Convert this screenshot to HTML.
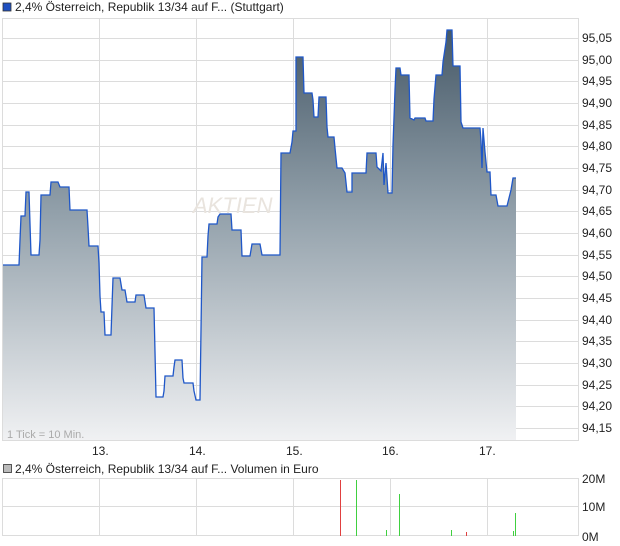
<!DOCTYPE html>
<html><head><meta charset="utf-8"><style>
html,body{margin:0;padding:0;background:#fff;width:620px;height:546px;overflow:hidden}
svg text{font-family:"Liberation Sans",sans-serif;font-size:12px;fill:#222}
</style></head><body>
<svg width="620" height="546" viewBox="0 0 620 546" xmlns="http://www.w3.org/2000/svg">
<defs><linearGradient id="g" x1="0" y1="30" x2="0" y2="440" gradientUnits="userSpaceOnUse">
<stop offset="0" stop-color="#465968"/><stop offset="0.45" stop-color="#93a1ab"/><stop offset="1" stop-color="#f0f1f3"/></linearGradient></defs>
<rect x="3" y="3" width="8" height="8" fill="#1f4fc0" stroke="#333" stroke-width="0.8"/>
<text x="15" y="11">2,4% Österreich, Republik 13/34 auf F... (Stuttgart)</text>
<g stroke="#dcdcdc" stroke-width="1">
<line x1="2.5" y1="18" x2="2.5" y2="441"/><line x1="578.5" y1="18" x2="578.5" y2="441"/>
<line x1="2" y1="18.5" x2="578" y2="18.5"/><line x1="2" y1="440.5" x2="578" y2="440.5"/>
<line x1="99.5" y1="18" x2="99.5" y2="441"/><line x1="196.5" y1="18" x2="196.5" y2="441"/><line x1="293.5" y1="18" x2="293.5" y2="441"/><line x1="390.5" y1="18" x2="390.5" y2="441"/><line x1="487.5" y1="18" x2="487.5" y2="441"/>
<line x1="2" y1="38.5" x2="578" y2="38.5"/><line x1="2" y1="60.5" x2="578" y2="60.5"/><line x1="2" y1="81.5" x2="578" y2="81.5"/><line x1="2" y1="103.5" x2="578" y2="103.5"/><line x1="2" y1="125.5" x2="578" y2="125.5"/><line x1="2" y1="146.5" x2="578" y2="146.5"/><line x1="2" y1="168.5" x2="578" y2="168.5"/><line x1="2" y1="190.5" x2="578" y2="190.5"/><line x1="2" y1="211.5" x2="578" y2="211.5"/><line x1="2" y1="233.5" x2="578" y2="233.5"/><line x1="2" y1="255.5" x2="578" y2="255.5"/><line x1="2" y1="276.5" x2="578" y2="276.5"/><line x1="2" y1="298.5" x2="578" y2="298.5"/><line x1="2" y1="320.5" x2="578" y2="320.5"/><line x1="2" y1="341.5" x2="578" y2="341.5"/><line x1="2" y1="363.5" x2="578" y2="363.5"/><line x1="2" y1="385.5" x2="578" y2="385.5"/><line x1="2" y1="406.5" x2="578" y2="406.5"/><line x1="2" y1="428.5" x2="578" y2="428.5"/>
</g>
<text x="193" y="213" style="font-size:22px;font-style:italic;fill:#e9e4de">AKTIEN</text>
<path d="M3,265 L19,265 L20,240 L21,216 L25,216 L26,192 L29,192 L30,224 L31,255 L39,255 L40,240 L41,195 L50,195 L51,182 L58,182 L60,187 L69,187 L70,210 L87,210 L88,227 L89,246 L98,246 L99,263 L100,296 L101,312 L104,312 L105,335 L111,335 L112,306 L113,278 L120,278 L122,290 L125,290 L127,302 L135,302 L136,295 L144,295 L146,308 L154,308 L155,352 L156,397 L163,397 L164,391 L165,376 L173,376 L174,367 L175,360 L182,360 L183,378 L184,383 L193,383 L194,391 L196,400 L200,400 L201,330 L202,257 L207,257 L208,236 L209,224 L217,224 L218,217 L220,214 L231,214 L232,230 L241,230 L242,256 L250,256 L252,244 L260,244 L262,255 L280,255 L281,153 L290,153 L292,142 L293,131 L296,131 L296,57 L303,57 L304,93 L312,93 L313,100 L314,117 L318,117 L319,97 L326,97 L327,127 L328,137 L334,137 L335,148 L337,168 L342,168 L345,173 L347,192 L352,192 L352,173 L358,173 L366,173 L367,153 L376,153 L377,167 L381,171 L383,153 L384,185 L386,163 L388,193 L392,193 L393,145 L395,90 L396,68 L400,68 L401,75 L409,75 L410,118 L414,120 L415,118 L425,118 L426,121 L433,121 L434,99 L436,75 L442,75 L443,62 L446,42 L447,30 L452,30 L453,66 L460,66 L461,122 L463,128 L480,128 L481,141 L482,168 L483,128 L485,152 L487,172 L490,172 L491,195 L496,195 L498,206 L507,206 L509,198 L511,190 L513,178 L516,178 L516,440 L3,440 Z" fill="url(#g)"/>
<path d="M3,265 L19,265 L20,240 L21,216 L25,216 L26,192 L29,192 L30,224 L31,255 L39,255 L40,240 L41,195 L50,195 L51,182 L58,182 L60,187 L69,187 L70,210 L87,210 L88,227 L89,246 L98,246 L99,263 L100,296 L101,312 L104,312 L105,335 L111,335 L112,306 L113,278 L120,278 L122,290 L125,290 L127,302 L135,302 L136,295 L144,295 L146,308 L154,308 L155,352 L156,397 L163,397 L164,391 L165,376 L173,376 L174,367 L175,360 L182,360 L183,378 L184,383 L193,383 L194,391 L196,400 L200,400 L201,330 L202,257 L207,257 L208,236 L209,224 L217,224 L218,217 L220,214 L231,214 L232,230 L241,230 L242,256 L250,256 L252,244 L260,244 L262,255 L280,255 L281,153 L290,153 L292,142 L293,131 L296,131 L296,57 L303,57 L304,93 L312,93 L313,100 L314,117 L318,117 L319,97 L326,97 L327,127 L328,137 L334,137 L335,148 L337,168 L342,168 L345,173 L347,192 L352,192 L352,173 L358,173 L366,173 L367,153 L376,153 L377,167 L381,171 L383,153 L384,185 L386,163 L388,193 L392,193 L393,145 L395,90 L396,68 L400,68 L401,75 L409,75 L410,118 L414,120 L415,118 L425,118 L426,121 L433,121 L434,99 L436,75 L442,75 L443,62 L446,42 L447,30 L452,30 L453,66 L460,66 L461,122 L463,128 L480,128 L481,141 L482,168 L483,128 L485,152 L487,172 L490,172 L491,195 L496,195 L498,206 L507,206 L509,198 L511,190 L513,178 L516,178" fill="none" stroke="#1f57c8" stroke-width="1.3"/>
<text x="7" y="438" style="font-size:11px;fill:#aaa">1 Tick = 10 Min.</text>
<g>
<text x="582" y="42">95,05</text><text x="582" y="64">95,00</text><text x="582" y="85">94,95</text><text x="582" y="107">94,90</text><text x="582" y="129">94,85</text><text x="582" y="150">94,80</text><text x="582" y="172">94,75</text><text x="582" y="194">94,70</text><text x="582" y="215">94,65</text><text x="582" y="237">94,60</text><text x="582" y="259">94,55</text><text x="582" y="280">94,50</text><text x="582" y="302">94,45</text><text x="582" y="324">94,40</text><text x="582" y="345">94,35</text><text x="582" y="367">94,30</text><text x="582" y="389">94,25</text><text x="582" y="410">94,20</text><text x="582" y="432">94,15</text>
</g>
<text x="92" y="455">13.</text><text x="189" y="455">14.</text><text x="286" y="455">15.</text><text x="382" y="455">16.</text><text x="479" y="455">17.</text>
<rect x="3.5" y="464.5" width="8" height="8" fill="#bbb" stroke="#333" stroke-width="0.8"/>
<text x="15" y="473">2,4% Österreich, Republik 13/34 auf F... Volumen in Euro</text>
<g stroke="#dcdcdc" stroke-width="1">
<line x1="2" y1="478.5" x2="578" y2="478.5"/><line x1="2" y1="506.5" x2="578" y2="506.5"/><line x1="2" y1="535.5" x2="578" y2="535.5"/>
<line x1="2.5" y1="478" x2="2.5" y2="536"/><line x1="578.5" y1="478" x2="578.5" y2="536"/>
<line x1="99.5" y1="478" x2="99.5" y2="536"/><line x1="196.5" y1="478" x2="196.5" y2="536"/><line x1="293.5" y1="478" x2="293.5" y2="536"/><line x1="390.5" y1="478" x2="390.5" y2="536"/><line x1="487.5" y1="478" x2="487.5" y2="536"/>
</g>
<g stroke-width="1">
<line x1="340.5" y1="480" x2="340.5" y2="536" stroke="#e04040"/>
<line x1="356.5" y1="480" x2="356.5" y2="536" stroke="#40d040"/>
<line x1="386.5" y1="530" x2="386.5" y2="536" stroke="#40d040"/>
<line x1="399.5" y1="494" x2="399.5" y2="536" stroke="#40d040"/>
<line x1="451.5" y1="530" x2="451.5" y2="536" stroke="#40d040"/>
<line x1="466.5" y1="532" x2="466.5" y2="536" stroke="#e04040"/>
<line x1="513.5" y1="531" x2="513.5" y2="536" stroke="#40d040"/>
<line x1="515.5" y1="513" x2="515.5" y2="536" stroke="#40d040"/>
</g>
<text x="582" y="483">20M</text><text x="582" y="511">10M</text><text x="582" y="541">0M</text>
</svg>
</body></html>
